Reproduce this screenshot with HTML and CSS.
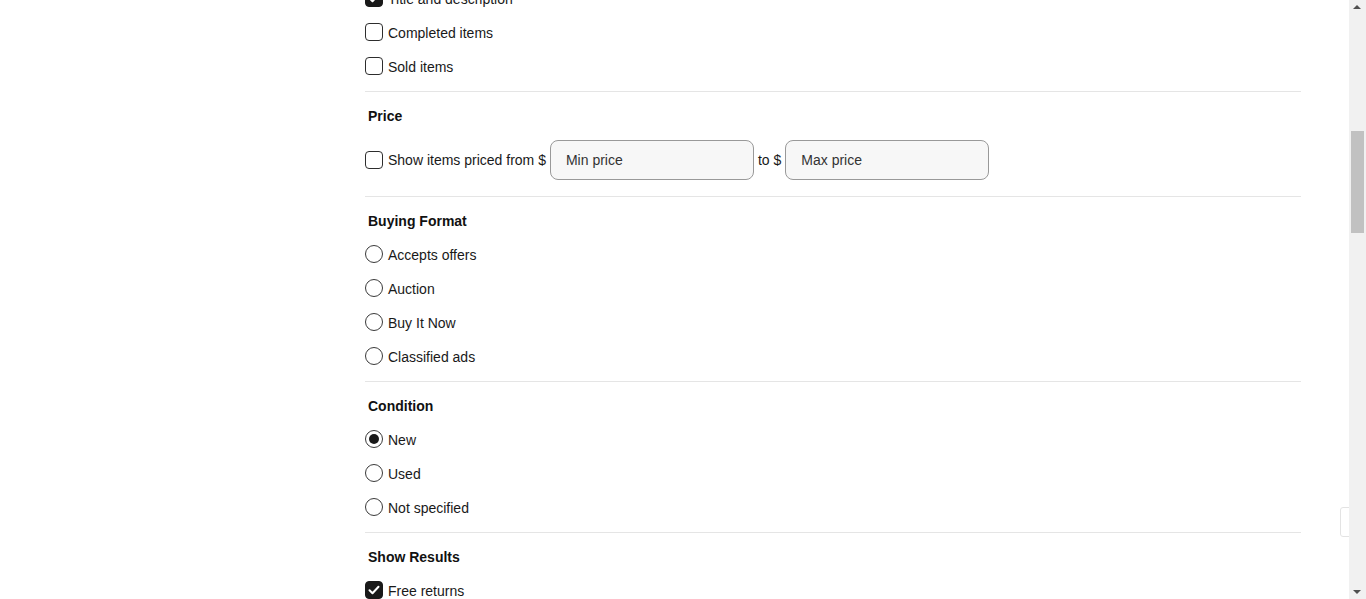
FILE: index.html
```html
<!DOCTYPE html>
<html lang="en">
<head>
<meta charset="utf-8">
<title>Advanced Search</title>
<link rel="stylesheet" href="styles.css">
</head>
<body>
<main class="page">
  <form class="filters">
    <section class="group group--first">
      <label class="row"><span class="box box--checked"><svg viewBox="0 0 18 18"><path d="M4.5 9.2l3 3 6-6.4" /></svg></span><span class="txt">Title and description</span></label>
      <label class="row"><span class="box"></span><span class="txt">Completed items</span></label>
      <label class="row"><span class="box"></span><span class="txt">Sold items</span></label>
    </section>
    <section class="group">
      <h3 class="legend">Price</h3>
      <div class="row row--price">
        <span class="box"></span>
        <span class="txt">Show items priced from $</span>
        <span class="field">Min price</span>
        <span class="txt txt--to">to $</span>
        <span class="field">Max price</span>
      </div>
    </section>
    <section class="group">
      <h3 class="legend">Buying Format</h3>
      <label class="row"><span class="radio"></span><span class="txt">Accepts offers</span></label>
      <label class="row"><span class="radio"></span><span class="txt">Auction</span></label>
      <label class="row"><span class="radio"></span><span class="txt">Buy It Now</span></label>
      <label class="row"><span class="radio"></span><span class="txt">Classified ads</span></label>
    </section>
    <section class="group">
      <h3 class="legend">Condition</h3>
      <label class="row"><span class="radio radio--checked"></span><span class="txt">New</span></label>
      <label class="row"><span class="radio"></span><span class="txt">Used</span></label>
      <label class="row"><span class="radio"></span><span class="txt">Not specified</span></label>
    </section>
    <section class="group group--last">
      <h3 class="legend">Show Results</h3>
      <label class="row"><span class="box box--checked"><svg viewBox="0 0 18 18"><path d="M4.5 9.2l3 3 6-6.4" /></svg></span><span class="txt">Free returns</span></label>
    </section>
  </form>
</main>
<div class="feedback-tab"></div>
<div class="scrollbar">
  <span class="sb-arrow sb-arrow--up"></span>
  <span class="sb-thumb"></span>
  <span class="sb-arrow sb-arrow--down"></span>
</div>
</body>
</html>
```

FILE: styles.css
```css
html, body {
  margin: 0;
  padding: 0;
  height: 100%;
  overflow: hidden;
  background: #fff;
}

body {
  font-family: "Liberation Sans", Arial, sans-serif;
  font-size: 14px;
  color: #191919;
}

.page {
  width: 1349px;
  padding-left: 365px;
  box-sizing: border-box;
}

.filters {
  width: 936px;
  margin-top: -19px;
}

.group {
  border-top: 1px solid #e5e5e5;
  padding: 14px 0 8px;
}

.group--first {
  border-top: none;
  padding-top: 0;
}

.legend {
  margin: 0 0 6px;
  padding-left: 3px;
  height: 20px;
  line-height: 20px;
  font-size: 14px;
  font-weight: bold;
  color: #111;
}

.row {
  display: flex;
  align-items: center;
  height: 34px;
  line-height: 18px;
}

.row--price {
  height: 56px;
}

.txt {
  margin-top: 2px;
  white-space: nowrap;
}

.row--price .txt {
  margin-top: 0;
}

.box,
.radio {
  flex: none;
  width: 18px;
  height: 18px;
  box-sizing: border-box;
  border: 1px solid #2d2d2d;
  margin-right: 5px;
  display: flex;
  align-items: center;
  justify-content: center;
}

.box {
  border-radius: 4px;
}

.box--checked {
  background: #191919;
  border-color: #191919;
}

.box svg {
  width: 18px;
  height: 18px;
  flex: none;
}

.box svg path {
  fill: none;
  stroke: #fff;
  stroke-width: 2;
  stroke-linecap: round;
  stroke-linejoin: round;
}

.radio {
  border-radius: 50%;
  border-color: #3a3a3a;
}

.radio--checked::after {
  content: "";
  width: 10px;
  height: 10px;
  border-radius: 50%;
  background: #191919;
}

.txt--to {
  margin-left: 4px;
}

.field {
  flex: none;
  width: 204px;
  height: 40px;
  box-sizing: border-box;
  margin-left: 4px;
  padding: 0 15px;
  border: 1px solid #999;
  border-radius: 8px;
  background: #f7f7f7;
  display: flex;
  align-items: center;
  color: #333;
  font-size: 14px;
}

.feedback-tab {
  position: fixed;
  left: 1340px;
  top: 507px;
  width: 20px;
  height: 30px;
  box-sizing: border-box;
  border: 1px solid #e3e3e3;
  border-radius: 3px;
  background: #fff;
}

.scrollbar {
  position: fixed;
  top: 0;
  right: 0;
  width: 17px;
  height: 100%;
  background: #f1f1f1;
}

.sb-thumb {
  position: absolute;
  left: 2px;
  top: 131px;
  width: 13px;
  height: 102px;
  background: #c1c1c1;
}

.sb-arrow {
  position: absolute;
  left: 4px;
  width: 0;
  height: 0;
  border-left: 4px solid transparent;
  border-right: 4px solid transparent;
}

.sb-arrow--up {
  top: 5px;
  border-bottom: 4px solid #505050;
}

.sb-arrow--down {
  bottom: 5px;
  border-top: 4px solid #505050;
}
```
